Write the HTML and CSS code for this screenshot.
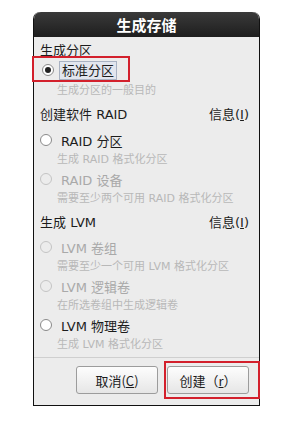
FILE: index.html
```html
<!DOCTYPE html>
<html lang="zh-CN">
    <head>
        <meta charset="UTF-8" />
        <title>生成存储</title>
        <link rel="stylesheet" href="styles.css">
    </head>
    <body>
        <div class="dialog">
            <div class="title">生成存储</div>
            <div class="content">
                <div class="section first">
                    <div class="header"><span>生成分区</span></div>
                    <div class="option marked">
                        <span class="radio checked"></span>
                        <span class="label focus">标准分区</span>
                    </div>
                    <div class="desc">生成分区的一般目的</div>
                </div>

                <div class="section">
                    <div class="header"><span>创建软件 RAID</span><span>信息(<u>I</u>)</span></div>
                    <div class="option">
                        <span class="radio"></span>
                        <span class="label">RAID 分区</span>
                    </div>
                    <div class="desc">生成 RAID 格式化分区</div>
                    <div class="option disabled">
                        <span class="radio"></span>
                        <span class="label">RAID 设备</span>
                    </div>
                    <div class="desc">需要至少两个可用 RAID 格式化分区</div>
                </div>

                <div class="section">
                    <div class="header"><span>生成 LVM</span><span>信息(<u>I</u>)</span></div>
                    <div class="option disabled">
                        <span class="radio"></span>
                        <span class="label">LVM 卷组</span>
                    </div>
                    <div class="desc">需要至少一个可用 LVM 格式化分区</div>
                    <div class="option disabled">
                        <span class="radio"></span>
                        <span class="label">LVM 逻辑卷</span>
                    </div>
                    <div class="desc">在所选卷组中生成逻辑卷</div>
                    <div class="option">
                        <span class="radio"></span>
                        <span class="label">LVM 物理卷</span>
                    </div>
                    <div class="desc">生成 LVM 格式化分区</div>
                </div>
            </div>
            <div class="buttons">
                <button class="btn">取消(<u>C</u>)</button>
                <button class="btn marked">创建（<u>r</u>）</button>
            </div>
        </div>
    </body>
</html>
```

FILE: styles.css
```css
body {
    margin: 0;
    background-color: #fff;
    font-family: "DejaVu Sans", "Noto Sans CJK SC", sans-serif;
    color: #1c1c1c;
}
.dialog {
    margin: 12px 0 0 33px;
    width: 225px;
    height: 393px;
    border: 1px solid #111;
    border-top: none;
    border-radius: 7px 7px 0 0;
    background-color: #ececec;
    display: flex;
    flex-direction: column;
}
.title {
    height: 25px;
    background: linear-gradient(#3a3a3a, #1e1e1e);
    border-radius: 7px 7px 0 0;
    color: #fff;
    font-family: "Noto Sans CJK SC", sans-serif;
    font-weight: bold;
    font-size: 15px;
    display: flex;
    align-items: center;
    justify-content: center;
}
.content {
    padding: 3px 10px 0 6px;
    flex: 1;
}
.section {
    margin-top: 4px;
}
.section.first {
    margin-top: 0;
}
.header {
    height: 18px;
    display: flex;
    justify-content: space-between;
    align-items: center;
    font-size: 13px;
    margin-bottom: 8px;
}
.section.first .header {
    margin-bottom: 2px;
}
.section:last-child .header {
    margin-bottom: 7px;
}
.option {
    height: 20px;
    display: flex;
    align-items: center;
    font-size: 13px;
}
.marked {
    position: relative;
}
.marked::after {
    content: "";
    position: absolute;
    border: 2px solid #d3202c;
}
.option.marked::after {
    left: -8px;
    top: -4px;
    width: 94px;
    height: 22px;
}
.radio {
    width: 10px;
    height: 10px;
    border: 1px solid #8a8a8a;
    border-radius: 50%;
    background-color: #fff;
    margin-right: 9px;
    display: flex;
    align-items: center;
    justify-content: center;
    flex-shrink: 0;
}
.radio.checked::after {
    content: "";
    width: 6px;
    height: 6px;
    border-radius: 50%;
    background-color: #222;
}
.option.marked .radio {
    margin-left: 2px;
    margin-right: 5px;
}
.label.focus {
    padding: 0 2px;
    border: 1px solid #a9b2c2;
    background-color: #e2e6ee;
    line-height: 17px;
}
.option.disabled {
    color: #a9a9a9;
}
.option.disabled .radio {
    border-color: #c4c4c4;
    background-color: #ececec;
}
.desc {
    height: 19px;
    line-height: 19px;
    padding-left: 17px;
    font-size: 11px;
    color: #b8b8b8;
}
.section.first .desc {
    margin-top: 1px;
}
.buttons {
    border-top: 1px solid #cfcfcf;
    padding: 8px 10px 11px 0;
    display: flex;
    justify-content: flex-end;
    gap: 9px;
}
.btn {
    width: 82px;
    height: 28px;
    font-family: "Noto Sans CJK SC", sans-serif;
    font-size: 13px;
    color: #1c1c1c;
    background: linear-gradient(#fdfdfd, #e6e6e6);
    border: 1px solid #9c9c9c;
    border-radius: 3px;
    padding: 0;
}
.btn.marked::after {
    left: -4px;
    top: -6px;
    width: 92px;
    height: 34px;
}
```
